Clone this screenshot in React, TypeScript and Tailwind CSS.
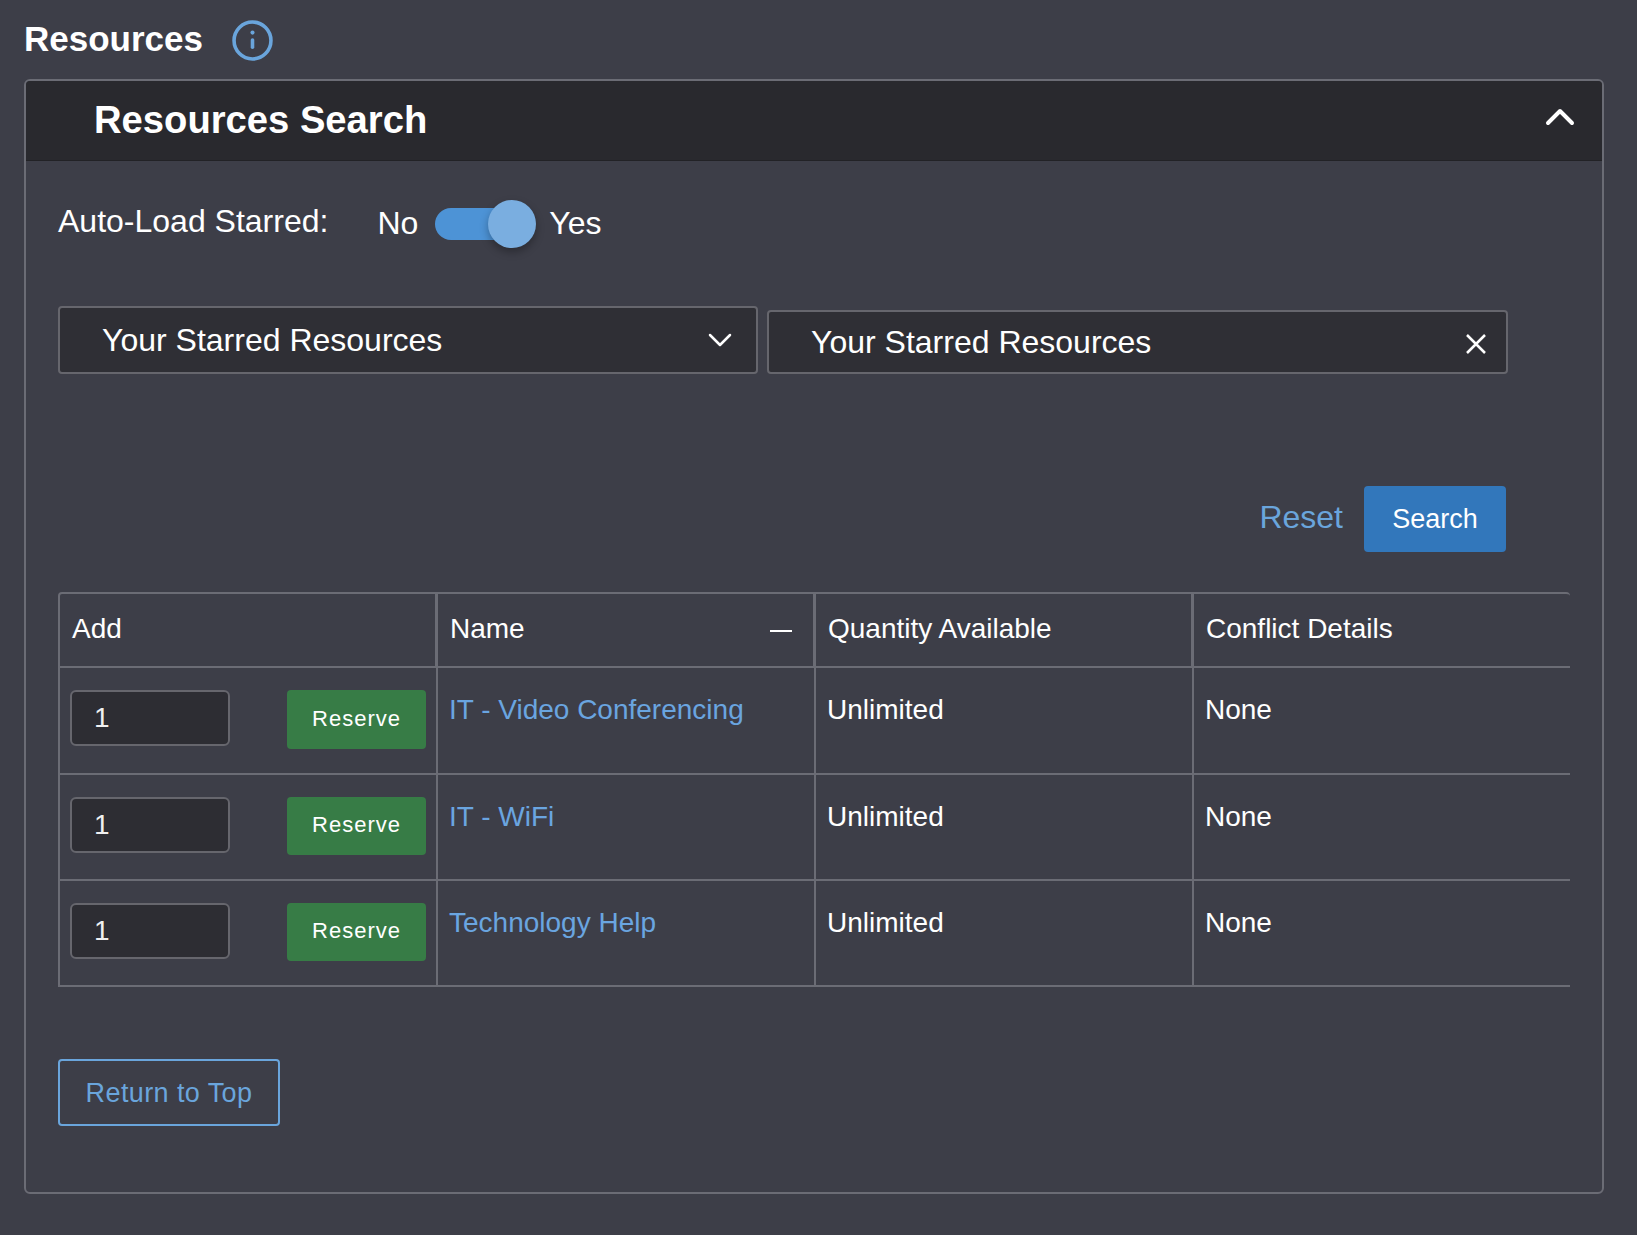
import { useState } from "react";

const rows = [
  { name: "IT - Video Conferencing", height: "h-[107px]", buttonHeight: "h-[59px]" },
  { name: "IT - WiFi", height: "h-[106px]", buttonHeight: "h-[58px]" },
  { name: "Technology Help", height: "h-[106px]", buttonHeight: "h-[58px]" },
];

function ResourceRow({ name, height, buttonHeight }: { name: string; height: string; buttonHeight: string }) {
  return (
    <tr>
      <td className={`${height} border-2 border-r-0 border-t-0 border-[#6b6c75] p-0 align-top`}>
        <div className="flex items-start justify-between pl-[10px] pr-[10px] pt-[22px]">
          <input
            defaultValue="1"
            className="h-[56px] w-[160px] rounded-md border-2 border-[#66666d] bg-[#2d2d33] pl-[22px] text-[28px] text-[#f0f0f0] outline-none"
          />
          <button className={`${buttonHeight} w-[139px] rounded bg-[#377c46] pb-[3px] text-[22px] tracking-[1px] text-white`}>
            Reserve
          </button>
        </div>
      </td>
      <td className="border-b-2 border-l-2 border-[#6b6c75] pl-[11px] pr-3 pt-[21px] align-top text-[#6aa5e0]">
        {name}
      </td>
      <td className="border-b-2 border-l-2 border-[#6b6c75] pl-[11px] pr-3 pt-[21px] align-top">Unlimited</td>
      <td className="border-b-2 border-l-2 border-[#6b6c75] pl-[11px] pr-3 pt-[21px] align-top">None</td>
    </tr>
  );
}

export default function App() {
  const [autoLoad, setAutoLoad] = useState(true);

  return (
    <div className="min-h-[1235px] bg-[#3d3e48] pl-6 pr-[33px] pt-[18px] font-['Liberation_Sans',Arial,sans-serif] text-white">
      <div className="flex h-[61px] items-start">
        <h1 className="text-[35px] font-bold leading-[41px]">Resources</h1>
        <svg viewBox="0 0 40 40" className="ml-[29px] mt-[2px] h-[41px] w-[41px] text-[#6aa5dc]" fill="none" stroke="currentColor">
          <circle cx="20" cy="20" r="18" strokeWidth="3.5" />
          <path d="M20 19.5v7" strokeWidth="3.5" strokeLinecap="round" />
          <circle cx="20" cy="12.3" r="2" fill="currentColor" stroke="none" />
        </svg>
      </div>

      <section className="h-[1115px] rounded-md border-2 border-[#6b6c75]">
        <header className="flex h-[80px] items-center justify-between rounded-t border-b border-[#222226] bg-[#29292e] pl-[68px] pr-[27px]">
          <h2 className="pb-[2px] text-[38.2px] font-bold">Resources Search</h2>
          <svg viewBox="0 0 30 20" className="mb-[10px] h-[20px] w-[30px]" fill="none" stroke="white" strokeWidth="4" strokeLinecap="round" strokeLinejoin="round">
            <path d="M3 17 15 5l12 12" />
          </svg>
        </header>

        <div className="px-8">
          <div className="flex h-[145px] items-start pt-[41px] text-[32px]">
            <span className="mt-px leading-[37px]">Auto-Load Starred:</span>
            <span className="ml-[49px] mt-[3px] leading-[37px]">No</span>
            <button
              onClick={() => setAutoLoad(!autoLoad)}
              className="relative ml-[17px] mt-[6px] h-8 w-[80px] rounded-full bg-[#4d93d6]"
            >
              <span className="absolute -top-2 right-[-21px] h-12 w-12 rounded-full bg-[#7aaee0] shadow-[0_4px_8px_rgba(0,0,0,0.3)]" />
            </button>
            <span className="ml-[34px] mt-[3px] leading-[37px]">Yes</span>
          </div>

          <div className="flex items-end gap-[9px]">
            <div className="flex h-[68px] w-[700px] items-center justify-between rounded border-2 border-[#66666d] bg-[#2f2f35] pl-[42px] pr-[24px] text-[32px]">
              <span>Your Starred Resources</span>
              <svg viewBox="0 0 24 16" className="h-[16px] w-[24px]" fill="none" stroke="white" strokeWidth="2.5" strokeLinecap="round" strokeLinejoin="round">
                <path d="M2 3l10 10L22 3" />
              </svg>
            </div>
            <div className="flex h-[64px] w-[741px] items-center justify-between rounded border-2 border-[#66666d] bg-[#2f2f35] pl-[42px] pr-[20px] text-[32px]">
              <span>Your Starred Resources</span>
              <svg viewBox="0 0 20 20" className="mt-[4px] h-[20px] w-[20px]" fill="none" stroke="white" strokeWidth="2.5">
                <path d="M1 1l18 18M19 1 1 19" />
              </svg>
            </div>
          </div>

          <div className="mt-[112px] flex w-[1448px] items-center justify-end gap-[21px]">
            <a className="mb-[5px] text-[32px] text-[#6aa5dc]">Reset</a>
            <button className="h-[66px] w-[142px] rounded bg-[#3277bb] text-[27px]">Search</button>
          </div>

          <table className="mt-10 w-[1512px] table-fixed border-separate border-spacing-0 text-[28px]">
            <thead>
              <tr className="h-[76px] text-left">
                <th className="rounded-tl border-2 border-r border-[#6b6c75] pb-[3px] pl-3 font-normal">Add</th>
                <th className="border-y-2 border-l-2 border-r border-[#6b6c75] pb-[3px] pl-3 font-normal">
                  <div className="flex items-center justify-between pr-[21px]">
                    <span>Name</span>
                    <span className="mt-[4px] h-[2px] w-[22px] bg-white" />
                  </div>
                </th>
                <th className="border-y-2 border-l-2 border-r border-[#6b6c75] pb-[3px] pl-3 font-normal">Quantity Available</th>
                <th className="rounded-tr border-y-2 border-l-2 border-[#6b6c75] pb-[3px] pl-3 font-normal">Conflict Details</th>
              </tr>
            </thead>
            <tbody>
              {rows.map((row) => (
                <ResourceRow key={row.name} name={row.name} height={row.height} buttonHeight={row.buttonHeight} />
              ))}
            </tbody>
          </table>

          <button className="mt-[72px] h-[67px] w-[222px] rounded border-2 border-[#6aa5dc] pt-[2px] text-[27px] tracking-[0.4px] text-[#6aa5dc]">
            Return to Top
          </button>
        </div>
      </section>
    </div>
  );
}
